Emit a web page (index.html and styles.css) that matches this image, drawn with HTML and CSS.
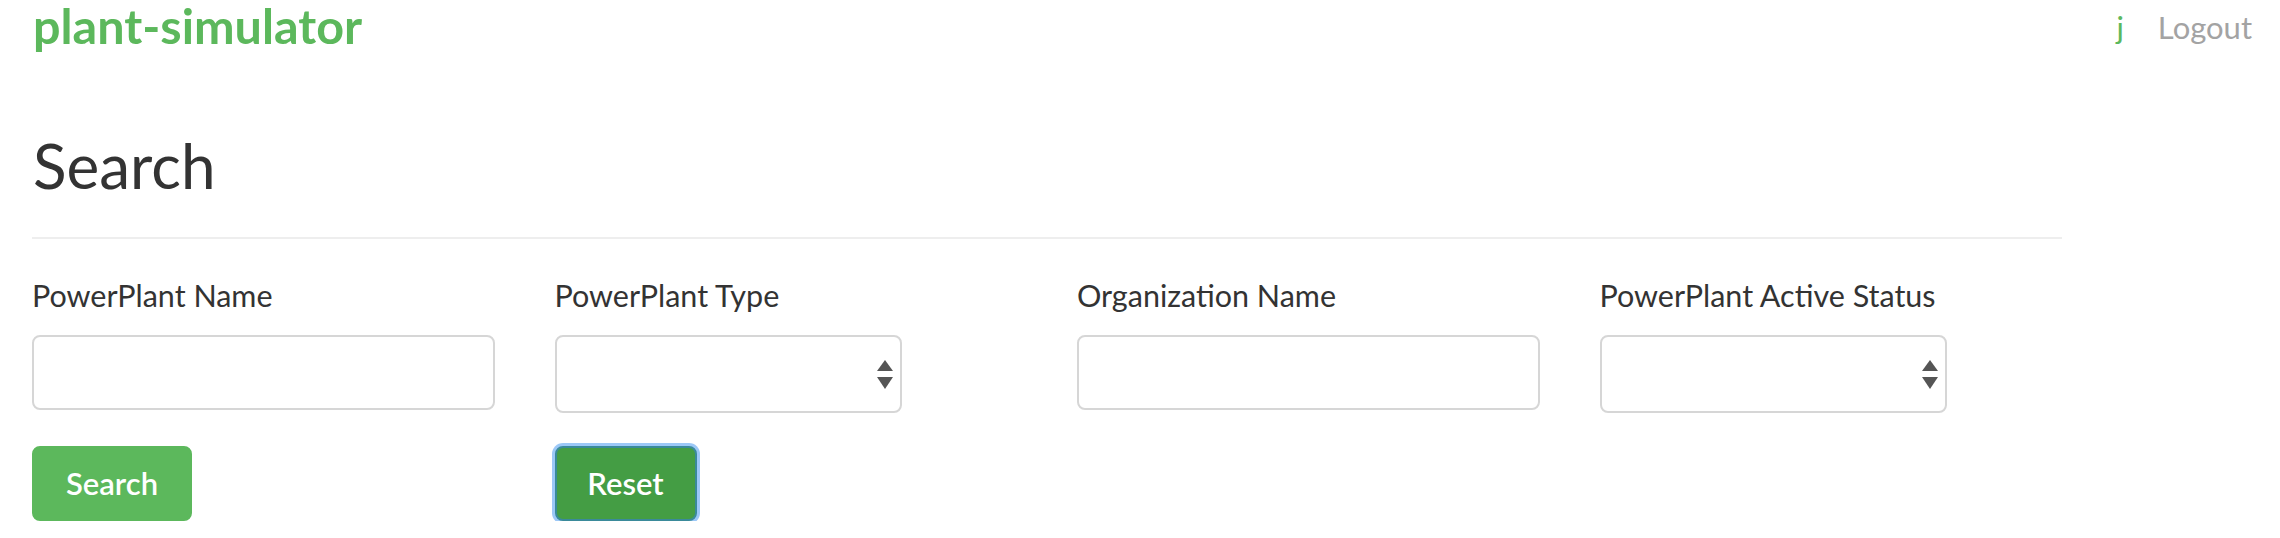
FILE: index.html
```html
<!DOCTYPE html>
<html lang="en">
<head>
<meta charset="utf-8">
<title>plant-simulator</title>
<link rel="stylesheet" href="styles.css">
</head>
<body>
<header class="navbar">
  <a class="brand" href="#">plant-simulator</a>
  <nav class="nav-right">
    <a class="user" href="#">j</a>
    <a class="logout" href="#">Logout</a>
  </nav>
</header>
<main class="container">
  <h1 class="page-title">Search</h1>
  <hr class="divider">
  <form class="search-form">
    <div class="fields">
      <div class="form-group">
        <label class="field-label">PowerPlant Name</label>
        <input class="text-input" type="text">
      </div>
      <div class="form-group">
        <label class="field-label">PowerPlant Type</label>
        <div class="select-wrap">
          <select class="select-input"><option></option></select>
        </div>
      </div>
      <div class="form-group">
        <label class="field-label">Organization Name</label>
        <input class="text-input" type="text">
      </div>
      <div class="form-group">
        <label class="field-label">PowerPlant Active Status</label>
        <div class="select-wrap">
          <select class="select-input"><option></option></select>
        </div>
      </div>
    </div>
    <div class="actions">
      <div class="action-cell"><button type="button" class="btn btn-success">Search</button></div>
      <div class="action-cell"><button type="button" class="btn btn-success btn-focus">Reset</button></div>
    </div>
  </form>
</main>
</body>
</html>
```
FILE: styles.css
```css
* { box-sizing: border-box; }

html, body {
  margin: 0;
  padding: 0;
  background: #fff;
}

body {
  font-family: Lato, "Liberation Sans", sans-serif;
  color: #333;
  width: 2280px;
}

.navbar {
  display: flex;
  justify-content: space-between;
  align-items: flex-start;
  height: 50px;
  padding: 0 28px 0 33px;
}

.brand {
  font-size: 48.5px;
  line-height: 50px;
  font-weight: 700;
  color: #5cb85c;
  text-decoration: none;
}

.nav-right {
  display: flex;
  align-items: baseline;
  gap: 34px;
  padding-top: 2px;
  font-size: 31px;
  line-height: 50px;
}

.user {
  color: #5cb85c;
  text-decoration: none;
}

.logout {
  color: #a3a3a3;
  text-decoration: none;
}

.container {
  width: 2030px;
  margin-left: 32px;
}

.page-title {
  margin: 78px 0 0 0;
  font-size: 62px;
  line-height: 75px;
  font-weight: 400;
  color: #333;
  padding-left: 1px;
}

.divider {
  margin: 34px 0 0 0;
  border: 0;
  border-top: 2px solid #eee;
  height: 0;
}

.fields,
.actions {
  display: grid;
  grid-template-columns: repeat(4, 462.5px);
  column-gap: 60px;
}

.fields {
  margin-top: 36px;
  align-items: start;
}

.form-group {
  display: flex;
  flex-direction: column;
  align-items: flex-start;
}

.field-label {
  font-size: 30.5px;
  line-height: 40px;
  color: #333;
  margin-bottom: 20px;
}

.text-input {
  width: 100%;
  height: 75px;
  border: 2px solid #d6d6d6;
  border-radius: 8px;
  background: #fff;
  font: inherit;
  outline: none;
}

.select-wrap {
  position: relative;
  width: 347px;
  height: 78px;
}

.select-input {
  -webkit-appearance: none;
  appearance: none;
  width: 100%;
  height: 100%;
  border: 2px solid #d6d6d6;
  border-radius: 8px;
  background: #fff;
  font: inherit;
  outline: none;
}

.select-wrap::before,
.select-wrap::after {
  content: "";
  position: absolute;
  right: 9px;
  width: 0;
  height: 0;
  border-left: 8px solid transparent;
  border-right: 8px solid transparent;
  pointer-events: none;
}

.select-wrap::before {
  top: 25px;
  border-bottom: 11px solid #555;
}

.select-wrap::after {
  top: 42px;
  border-top: 12px solid #555;
}

.actions {
  margin-top: 33px;
}

.btn {
  height: 75px;
  width: 160px;
  padding: 0;
  border: 2px solid #5cb85c;
  border-radius: 8px;
  background: #5cb85c;
  color: #fff;
  font-family: Lato, "Liberation Sans", sans-serif;
  font-size: 31px;
  font-weight: 600;
  line-height: 1;
  cursor: pointer;
}

.btn-focus {
  background: #449d44;
  border-color: #3a8a9a;
  box-shadow: 0 0 0 3px #9cc8f7;
  width: 142px;
}
```
